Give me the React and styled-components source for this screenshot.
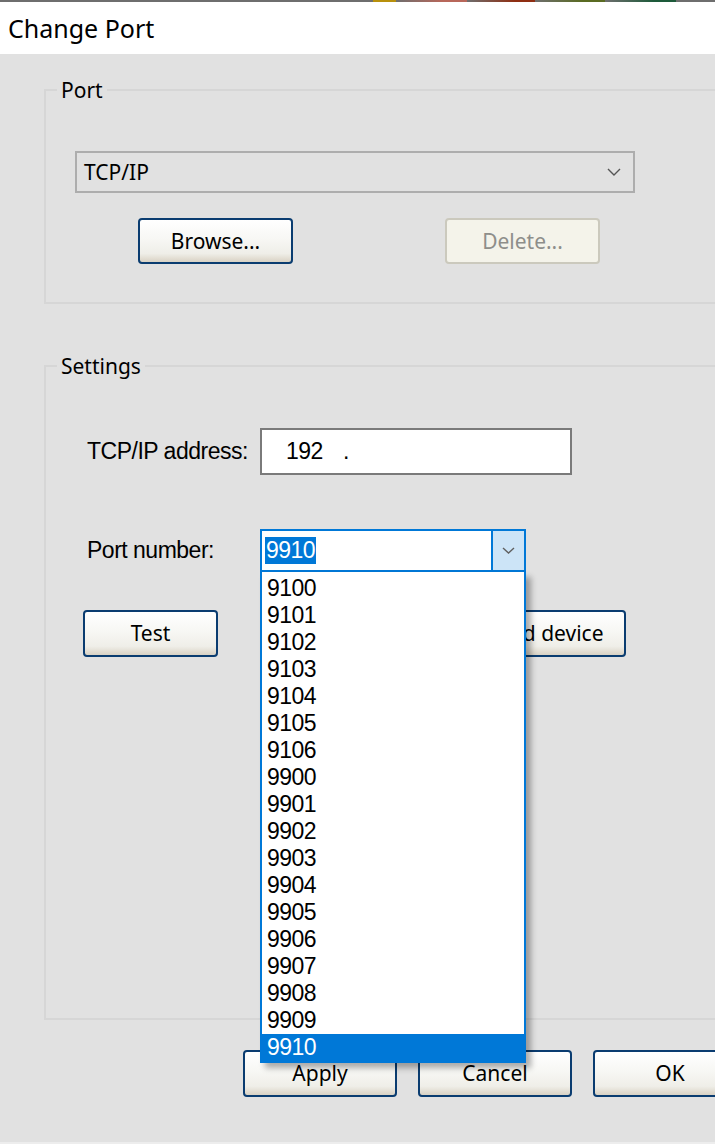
import React from 'react';
import styled, { createGlobalStyle } from 'styled-components';

const Global = createGlobalStyle`
  html, body { margin: 0; padding: 0; overflow: hidden; background: #e1e1e1; }
  #root { width: 715px; height: 1144px; overflow: hidden; }
`;

const Dialog = styled.div`
  width: 800px;
  height: 1144px;
  box-sizing: border-box;
  display: flex;
  flex-direction: column;
  background: #e1e1e1;
  border-bottom: 2px solid #ededed;
  font-family: "Noto Sans", "Segoe UI", sans-serif;
  color: #000;
`;

const TopStrip = styled.div`
  height: 2px;
  flex: none;
  background: linear-gradient(to right,
    #6e6e6e 373px, #b8900c 373px, #b8900c 396px,
    #6e6e6e 396px, #b8675a 443px, #b8675a 467px,
    #6e6e6e 467px, #8f2e12 515px, #8f2e12 535px,
    #6e6e6e 535px, #5a6b22 583px, #5a6b22 605px,
    #6e6e6e 605px, #1d5a3a 654px, #1d5a3a 676px,
    #6e6e6e 676px);
`;

const TitleBar = styled.div`
  height: 52px;
  flex: none;
  display: flex;
  align-items: center;
  padding-left: 8px;
  background: #fff;
  font-size: 25px;
`;

const Content = styled.div`
  display: flex;
  flex-direction: column;
  padding-left: 44px;
`;

const GroupBox = styled.fieldset`
  margin: ${p => p.$top}px 0 0 0;
  padding: 0;
  width: 730px;
  min-width: 0;
  border: 2px solid #d6d6d6;
`;

const Legend = styled.legend`
  margin-left: 11px;
  padding: 0 4px;
  font-size: 21px;
  line-height: 28px;
`;

const PortBody = styled.div`
  display: flex;
  flex-direction: column;
  padding: 47px 0 38px 29px;
`;

const Select = styled.div`
  width: 560px;
  height: 42px;
  box-sizing: border-box;
  display: flex;
  align-items: center;
  justify-content: space-between;
  padding: 0 12px 0 7px;
  border: 2px solid #adadad;
  background: #e1e1e1;
  font-size: 21px;
`;

const ButtonRow = styled.div`
  display: flex;
  gap: ${p => p.$gap}px;
  margin-top: ${p => p.$top || 0}px;
  margin-left: ${p => p.$indent || 0}px;
`;

const Button = styled.button`
  width: ${p => p.$w}px;
  height: ${p => p.$h || 47}px;
  box-sizing: border-box;
  flex: none;
  padding: 0;
  border: 2px solid ${p => (p.disabled ? '#cbc9bd' : '#0a3c70')};
  border-radius: 4px;
  background: ${p =>
    p.disabled
      ? '#f4f3ea'
      : 'linear-gradient(to bottom, #ffffff 0%, #f7f7f4 45%, #efeee8 80%, #e2ddd2 92%, #d8d2c5 100%)'};
  color: ${p => (p.disabled ? '#8e8e8a' : '#000')};
  font-family: "Noto Sans", "Segoe UI", sans-serif;
  font-size: 21px;
  line-height: 1;
`;

const SettingsBody = styled.div`
  display: flex;
  flex-direction: column;
  padding: 48px 0 361px 41px;
`;

const FieldRow = styled.div`
  display: flex;
  align-items: center;
  margin-top: ${p => p.$top || 0}px;
`;

const FieldLabel = styled.div`
  width: 173px;
  flex: none;
  font-family: "Liberation Sans", Arial, sans-serif;
  font-size: 23px;
  letter-spacing: -0.5px;
`;

const IpField = styled.div`
  width: 312px;
  height: 47px;
  box-sizing: border-box;
  display: flex;
  align-items: center;
  padding-left: 24px;
  border: 2px solid #7a7a7a;
  background: #fff;
  font-family: "Liberation Sans", Arial, sans-serif;
  font-size: 23px;
  letter-spacing: -0.5px;
`;

const IpOctet = styled.span`
  margin-right: 20px;
`;

const Combo = styled.div`
  position: relative;
  width: 266px;
  height: 43px;
  box-sizing: border-box;
  display: flex;
  border: 2px solid #0078d7;
  background: #fff;
`;

const ComboValue = styled.div`
  flex: 1;
  display: flex;
  align-items: center;
  padding-left: 3px;
`;

const Highlight = styled.span`
  padding: 0 1px;
  background: #0078d7;
  color: #fff;
  font-family: "Liberation Sans", Arial, sans-serif;
  font-size: 23px;
  line-height: 27px;
  letter-spacing: -0.5px;
`;

const DropButton = styled.div`
  width: 31px;
  flex: none;
  display: flex;
  align-items: center;
  justify-content: center;
  border-left: 2px solid #0078d7;
  background: #cce4f7;
`;

const DropList = styled.ul`
  position: absolute;
  top: calc(100% + 2px);
  left: -2px;
  right: -2px;
  z-index: 10;
  margin: 0;
  padding: 3px 0 0;
  list-style: none;
  border: 2px solid #0078d7;
  border-top: none;
  background: #fff;
  box-shadow: 5px 5px 6px rgba(0, 0, 0, 0.32);
`;

const ListItem = styled.li`
  height: 27px;
  padding-left: 5px;
  font-family: "Liberation Sans", Arial, sans-serif;
  font-size: 23px;
  line-height: 27px;
  letter-spacing: -0.5px;
  background: ${p => (p.$selected ? '#0078d7' : '#fff')};
  color: ${p => (p.$selected ? '#fff' : '#000')};
`;

const Chevron = ({ w = 14, h = 8, color = '#555' }) => (
  <svg width={w} height={h} viewBox={`0 0 ${w} ${h}`}>
    <path d={`M1 1 L${w / 2} ${h - 1} L${w - 1} 1`} fill="none" stroke={color} strokeWidth="1.4" />
  </svg>
);

const ports = [
  '9100', '9101', '9102', '9103', '9104', '9105', '9106',
  '9900', '9901', '9902', '9903', '9904', '9905', '9906', '9907', '9908', '9909', '9910',
];

export default function App() {
  return (
    <>
      <Global />
      <Dialog>
        <TopStrip />
        <TitleBar>Change Port</TitleBar>
        <Content>
          <GroupBox $top={22}>
            <Legend>Port</Legend>
            <PortBody>
              <Select>
                <span>TCP/IP</span>
                <Chevron />
              </Select>
              <ButtonRow $gap={152} $top={25} $indent={63}>
                <Button $w={155} $h={46}>Browse...</Button>
                <Button $w={155} $h={46} disabled>Delete...</Button>
              </ButtonRow>
            </PortBody>
          </GroupBox>

          <GroupBox $top={48}>
            <Legend>Settings</Legend>
            <SettingsBody>
              <FieldRow>
                <FieldLabel>TCP/IP address:</FieldLabel>
                <IpField>
                  <IpOctet>192</IpOctet>
                  <span>.</span>
                </IpField>
              </FieldRow>
              <FieldRow $top={54}>
                <FieldLabel>Port number:</FieldLabel>
                <Combo>
                  <ComboValue>
                    <Highlight>9910</Highlight>
                  </ComboValue>
                  <DropButton>
                    <Chevron w={13} h={7} color="#606060" />
                  </DropButton>
                  <DropList>
                    {ports.map(p => (
                      <ListItem key={p} $selected={p === '9910'}>{p}</ListItem>
                    ))}
                  </DropList>
                </Combo>
              </FieldRow>
              <ButtonRow $gap={253} $top={38} $indent={-4}>
                <Button $w={135}>Test</Button>
                <Button $w={155}>Find device</Button>
              </ButtonRow>
            </SettingsBody>
          </GroupBox>

          <ButtonRow $gap={21} $top={30} $indent={199}>
            <Button $w={154}>Apply</Button>
            <Button $w={154}>Cancel</Button>
            <Button $w={154}>OK</Button>
          </ButtonRow>
        </Content>
      </Dialog>
    </>
  );
}
